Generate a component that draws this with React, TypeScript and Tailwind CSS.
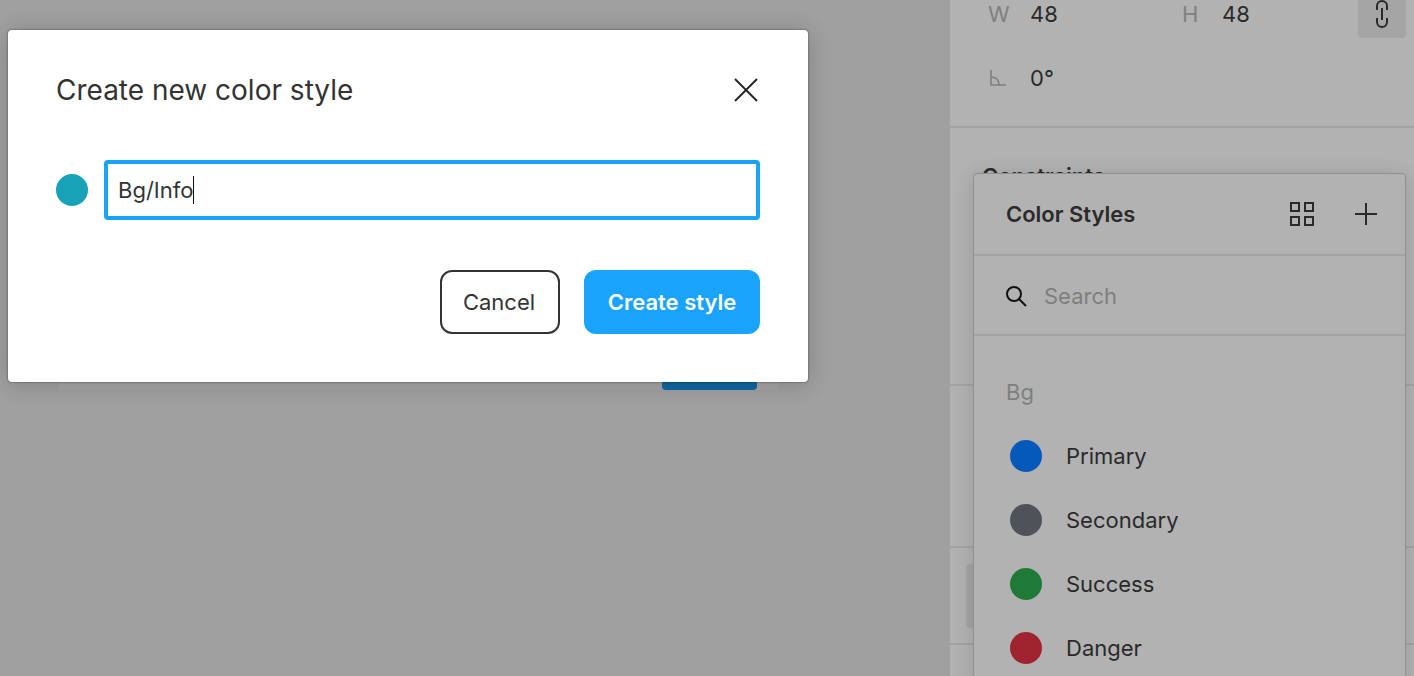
// Figma "Create new color style" dialog, dimmed editor behind it
const estilos = [
  { nome: "Primary", cor: "bg-[#0559bb]" },
  { nome: "Secondary", cor: "bg-[#4d5359]" },
  { nome: "Success", cor: "bg-[#1e7a36]" },
  { nome: "Danger", cor: "bg-[#a02330]" },
];

function ModalDialog() {
  return (
    <div className="absolute left-[8px] top-[30px] w-[800px] h-[352px] bg-white rounded-[4px] p-[48px] shadow-[0_0_2px_rgba(0,0,0,0.6),0_2px_24px_rgba(0,0,0,0.2)]">
      <div className="flex items-center justify-between h-[24px]">
        <h2 className="text-[28px] leading-[24px] text-[#333333]">Create new color style</h2>
        <svg width="24" height="24" viewBox="0 0 24 24" fill="none" stroke="#222222" strokeWidth="1.8" className="mr-[2px]">
          <path d="M1 1 L23 23 M23 1 L1 23" />
        </svg>
      </div>
      <div className="flex items-center gap-[16px] mt-[58px]">
        <div className="w-[32px] h-[32px] rounded-full bg-[#17a2b8]" />
        <div className="flex-1 h-[60px] border-[4px] border-[#1aa3fb] rounded-[4px] flex items-center pl-[10px]">
          <span className="text-[22px] text-[#333333]">Bg/Info</span>
          <span className="w-[1px] h-[28px] bg-[#111111]" />
        </div>
      </div>
      <div className="flex justify-end gap-[24px] mt-[50px]">
        <button className="w-[120px] h-[64px] pr-[2px] rounded-[12px] border-2 border-[#333333] bg-white text-[22px] text-[#333333]">Cancel</button>
        <button className="w-[176px] h-[64px] rounded-[12px] bg-[#1aa3fb] text-[22px] font-semibold text-white">Create style</button>
      </div>
    </div>
  );
}

function ColorStylesPopup() {
  return (
    <div className="absolute left-[23px] top-[173px] w-[433px] h-[560px] bg-[#b2b2b2] border border-[#8f8f8f] rounded-[4px] shadow-[0_2px_20px_rgba(0,0,0,0.14)]">
      <div className="h-[82px] flex items-center justify-between border-b-2 border-[#a3a3a3] pl-[32px] pr-[27px]">
        <span className="text-[22px] font-semibold text-[#2a2a2a]">Color Styles</span>
        <div className="flex items-center gap-[40px]">
          <svg width="24" height="24" viewBox="0 0 24 24" fill="none" stroke="#2a2a2a" strokeWidth="2">
            <rect x="1" y="1" width="8" height="8" />
            <rect x="15" y="1" width="8" height="8" />
            <rect x="1" y="15" width="8" height="8" />
            <rect x="15" y="15" width="8" height="8" />
          </svg>
          <svg width="24" height="24" viewBox="0 0 24 24" fill="none" stroke="#2a2a2a" strokeWidth="2">
            <path d="M12 1 V23 M1 12 H23" />
          </svg>
        </div>
      </div>
      <div className="h-[80px] flex items-center gap-[17px] border-b-2 border-[#a3a3a3] pl-[31px] pt-[2px]">
        <svg width="22" height="22" viewBox="0 0 22 22" fill="none" stroke="#111111" strokeWidth="2">
          <circle cx="9" cy="9" r="7" />
          <path d="M14 14 L21 21" />
        </svg>
        <span className="text-[22px] text-[#7f7f7f]">Search</span>
      </div>
      <div className="pl-[32px] pt-[40px]">
        <div className="text-[22px] leading-[32px] text-[#7f7f7f]">Bg</div>
        <div className="mt-[16px] flex flex-col">
          {estilos.map((e) => (
            <div key={e.nome} className="h-[64px] flex items-center gap-[24px] pl-[4px]">
              <div className={`w-[32px] h-[32px] rounded-full ${e.cor}`} />
              <span className="text-[22px] text-[#2a2a2a]">{e.nome}</span>
            </div>
          ))}
        </div>
      </div>
    </div>
  );
}

export default function App() {
  return (
    <div
      className="relative w-[1414px] h-[676px] overflow-hidden flex bg-[#a0a0a0]"
      style={{ fontFamily: "Inter, 'Liberation Sans', sans-serif" }}
    >
      {/* canvas: only the bottom edge of the frame shows under the dialog */}
      <div className="w-[950px] pl-[58px] pt-[100px]">
        <div className="w-[720px] h-[290px] bg-[#a6a6a6] flex items-end justify-end pr-[21px]">
          <div className="w-[95px] h-[20px] bg-[#0f67a3] rounded-b-[4px]" />
        </div>
      </div>

      {/* right panel */}
      <div className="relative flex-1 bg-[#b2b2b2]">
        <div className="h-[128px] border-b-2 border-[#a3a3a3] pl-[38px] pr-[8px]">
          <div className="flex items-center h-[28px] text-[22px]">
            <span className="w-[42px] text-[#808080]">W</span>
            <span className="w-[152px] text-[#2a2a2a]">48</span>
            <span className="w-[40px] text-[#808080]">H</span>
            <span className="flex-1 text-[#2a2a2a]">48</span>
            <div className="self-start shrink-0 w-[48px] h-[48px] -mt-[10px] rounded-[4px] bg-[#a5a5a5] flex items-end justify-center pb-[10px]">
              <svg width="14" height="28" viewBox="0 0 14 28" fill="none" stroke="#2a2a2a" strokeWidth="2">
                <path d="M2 10 V6 a5 5 0 0 1 10 0 V10 M2 18 V22 a5 5 0 0 0 10 0 V18 M7 8 V20" />
              </svg>
            </div>
          </div>
          <div className="flex items-center h-[28px] mt-[36px] text-[22px]">
            <div className="w-[42px] pl-[2px]">
              <svg width="16" height="16" viewBox="0 0 16 16" fill="none" stroke="#808080" strokeWidth="1.6">
                <path d="M1 0 V15 H16 M1 7 C6 7 9 10 9 15" />
              </svg>
            </div>
            <span className="text-[#2a2a2a]">0°</span>
          </div>
        </div>
        <div className="h-[258px] border-b-2 border-[#a3a3a3] pl-[32px] pt-[32px]">
          <div className="text-[22px] font-semibold text-[#2a2a2a]">Constraints</div>
        </div>
        <div className="h-[162px] border-b-2 border-[#a3a3a3]" />
        <div className="h-[97px] border-b-2 border-[#a3a3a3] pl-[16px] pt-[16px]">
          <div className="w-[60px] h-[64px] rounded-[4px] bg-[#a5a5a5]" />
        </div>
        <ColorStylesPopup />
      </div>

      <ModalDialog />
    </div>
  );
}
